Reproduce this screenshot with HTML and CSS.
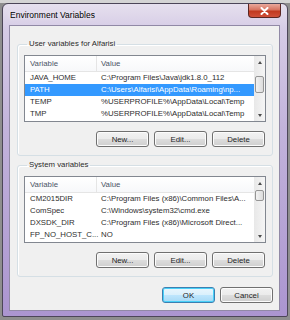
FILE: index.html
```html
<!DOCTYPE html>
<html lang="en">
<head>
    <meta charset="UTF-8">
    <title>Environment Variables</title>
    <link rel="stylesheet" href="styles.css">
</head>
<body>
<div class="window">
    <div class="titlebar">
        <span class="title">Environment Variables</span>
        <span class="close">
            <svg width="9" height="8" viewBox="0 0 9 8"><path d="M1.5 1 L7.5 7 M7.5 1 L1.5 7" stroke="#fff" stroke-width="2" stroke-linecap="round"/></svg>
        </span>
    </div>

    <div class="client">
        <fieldset class="group">
            <legend>User variables for Alfarisi</legend>
            <div class="list">
                <div class="list-body">
                    <div class="row head"><span class="c1">Variable</span><span class="c2">Value</span></div>
                    <div class="row"><span class="c1">JAVA_HOME</span><span class="c2">C:\Program Files\Java\jdk1.8.0_112</span></div>
                    <div class="row selected"><span class="c1">PATH</span><span class="c2">C:\Users\Alfarisi\AppData\Roaming\np...</span></div>
                    <div class="row"><span class="c1">TEMP</span><span class="c2">%USERPROFILE%\AppData\Local\Temp</span></div>
                    <div class="row"><span class="c1">TMP</span><span class="c2">%USERPROFILE%\AppData\Local\Temp</span></div>
                </div>
                <div class="scrollbar">
                    <span class="arrow"><span class="tri up"></span></span>
                    <span class="track"><span class="thumb thumb-user"></span></span>
                    <span class="arrow"><span class="tri down"></span></span>
                </div>
            </div>
            <div class="buttons">
                <button>New...</button>
                <button>Edit...</button>
                <button>Delete</button>
            </div>
        </fieldset>

        <fieldset class="group system">
            <legend>System variables</legend>
            <div class="list">
                <div class="list-body">
                    <div class="row head"><span class="c1">Variable</span><span class="c2">Value</span></div>
                    <div class="row"><span class="c1">CM2015DIR</span><span class="c2">C:\Program Files (x86)\Common Files\A...</span></div>
                    <div class="row"><span class="c1">ComSpec</span><span class="c2">C:\Windows\system32\cmd.exe</span></div>
                    <div class="row"><span class="c1">DXSDK_DIR</span><span class="c2">C:\Program Files (x86)\Microsoft Direct...</span></div>
                    <div class="row"><span class="c1">FP_NO_HOST_C...</span><span class="c2">NO</span></div>
                </div>
                <div class="scrollbar">
                    <span class="arrow"><span class="tri up"></span></span>
                    <span class="track"><span class="thumb thumb-system"></span></span>
                    <span class="arrow"><span class="tri down"></span></span>
                </div>
            </div>
            <div class="buttons">
                <button>New...</button>
                <button>Edit...</button>
                <button>Delete</button>
            </div>
        </fieldset>

        <div class="footer">
            <button class="default">OK</button>
            <button>Cancel</button>
        </div>
    </div>
</div>
</body>
</html>
```

FILE: styles.css
```css
body {
    margin: 0;
    width: 290px;
    height: 320px;
    overflow: hidden;
    background: linear-gradient(to bottom, #d4d4d4 0, #d4d4d4 3px, #8e8e8e 3px);
    font-family: "Liberation Sans", Arial, sans-serif;
    font-size: 7.8px;
    color: #1e1e1e;
}

.window {
    margin: 3px 0 0 2px;
    width: 286px;
    height: 314px;
    box-sizing: border-box;
    border: 1px solid #4c4658;
    border-radius: 6px 6px 2px 2px;
    padding: 0 7px 5px 6px;
    background: linear-gradient(to bottom, #e6e0ee 0, #d6cce6 8%, #c2b3db 40%, #ab95d0 100%);
    display: flex;
    flex-direction: column;
}

.titlebar {
    height: 21px;
    display: flex;
    justify-content: space-between;
    align-items: flex-start;
}

.title {
    margin-top: 6px;
    padding-left: 1px;
    font-size: 8.5px;
    color: #000;
    text-shadow: 0 0 4px #fff;
}

.close {
    width: 33px;
    height: 14px;
    margin-right: -1px;
    box-sizing: border-box;
    border: 1px solid #5a2622;
    border-top: none;
    border-radius: 0 0 4px 4px;
    background: linear-gradient(to bottom, #e9a99c 0, #d7735f 45%, #c1391f 55%, #d0503a 100%);
    display: flex;
    align-items: center;
    justify-content: center;
}

.client {
    flex: 1;
    background: #f0f0f0;
    border: 1px solid #9189a6;
    padding: 13px 6px 0 7px;
}

.group {
    margin: 0;
    border: 1px solid #d5dfe5;
    border-radius: 3px;
    padding: 6px 6px 8px 6px;
    box-shadow: inset 1px 1px 0 #fff;
}

.group legend {
    padding: 0 2px;
    margin-left: 3px;
    line-height: 10px;
    color: #2a2a2a;
}

.system {
    margin-top: 4px;
}

.list {
    height: 67px;
    box-sizing: border-box;
    border: 1px solid #828790;
    background: #fff;
    display: flex;
}

.list-body {
    flex: 1;
    overflow: hidden;
}

.row {
    height: 12px;
    line-height: 12px;
    display: flex;
    white-space: nowrap;
    color: #2e2e2e;
}

.row.head {
    height: 16px;
    line-height: 15px;
    box-sizing: border-box;
    border-bottom: 1px solid #e5e5e5;
    background: linear-gradient(to bottom, #fff 0, #f7f8fa 100%);
    color: #4c5566;
}

.c1 {
    width: 72px;
    padding-left: 5px;
    box-sizing: border-box;
    flex: none;
}

.head .c1 {
    border-right: 1px solid #e5e5e5;
}

.c2 {
    padding-left: 4px;
}

.row.selected {
    background: #3399ff;
    color: #fff;
}

.scrollbar {
    width: 11px;
    flex: none;
    display: flex;
    flex-direction: column;
    background: linear-gradient(to right, #e8e8e8, #f5f5f5);
}

.arrow {
    height: 12px;
    display: flex;
    align-items: center;
    justify-content: center;
}

.tri {
    width: 0;
    height: 0;
    border-left: 2.5px solid transparent;
    border-right: 2.5px solid transparent;
}

.tri.up {
    border-bottom: 3px solid #4d4d4d;
}

.tri.down {
    border-top: 3px solid #4d4d4d;
}

.track {
    flex: 1;
}

.thumb {
    display: block;
    margin: 0 1px;
    border: 1px solid #959595;
    border-radius: 2px;
    background: linear-gradient(to right, #f3f3f3, #dcdcdc);
}

.thumb-user {
    margin-top: 8px;
    height: 15px;
}

.thumb-system {
    margin-top: 1px;
    height: 9px;
}

.buttons,
.footer {
    display: flex;
    justify-content: flex-end;
    gap: 5px;
}

.buttons {
    margin-top: 9px;
    margin-right: 1px;
}

.footer {
    margin-top: 10px;
}

button {
    width: 53px;
    height: 16px;
    padding: 0;
    font-family: inherit;
    font-size: 7.8px;
    color: #1e1e1e;
    border: 1px solid #707070;
    border-radius: 3px;
    background: linear-gradient(to bottom, #f2f2f2 0, #ebebeb 50%, #dddddd 50%, #cfcfcf 100%);
    box-shadow: inset 0 0 0 1px #fcfcfc;
}

button.default {
    border-color: #3c7fb1;
    background: linear-gradient(to bottom, #eaf6fd 0, #d9f0fc 50%, #bee6fd 50%, #a7d9f5 100%);
    box-shadow: inset 0 0 0 1px #48d0f8;
}
```
